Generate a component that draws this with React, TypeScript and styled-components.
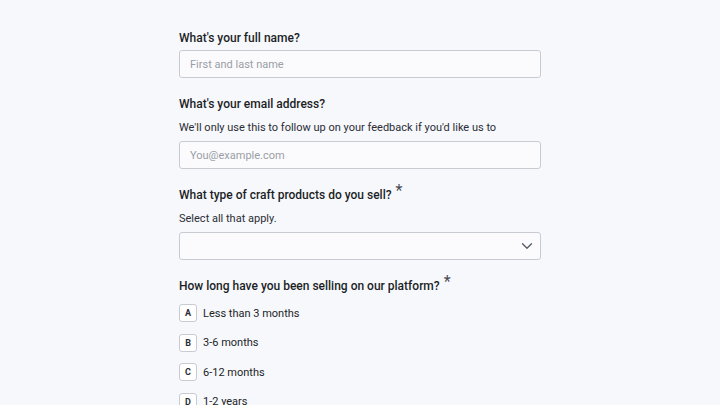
import React from 'react'
import styled, { createGlobalStyle } from 'styled-components'
import { ChevronDown } from 'lucide-react'

const GlobalStyle = createGlobalStyle`
  html, body {
    margin: 0;
    padding: 0;
    background: #f7f8fc;
    font-family: Roboto, "Liberation Sans", sans-serif;
    color: #1c1f26;
  }
`

const Page = styled.div`
  width: 720px;
  height: 405px;
  overflow: hidden;
  display: flex;
  justify-content: center;
`

const Form = styled.form`
  width: 362px;
  padding-top: 28px;
  display: flex;
  flex-direction: column;
  gap: 16px;
`

const Field = styled.div`
  display: flex;
  flex-direction: column;
`

const Question = styled.div<{ $gapBelow?: number }>`
  font-size: 12px;
  font-weight: 500;
  line-height: 20px;
  margin-bottom: ${({ $gapBelow }) => $gapBelow ?? 2}px;
  color: #1c1f26;
`

const Required = styled.span`
  font-size: 16px;
  font-weight: 400;
  line-height: 0;
  color: #4a4d55;
  margin-left: 4px;
  position: relative;
  top: -3px;
`

const Hint = styled.div`
  font-size: 11px;
  line-height: 18px;
  margin: 5px 0 4px;
  color: #2a2d34;
`

const TextInput = styled.input`
  box-sizing: border-box;
  height: 28px;
  width: 100%;
  border: 1px solid #c8cbd2;
  border-radius: 3px;
  background: #fbfbfd;
  padding: 0 10px;
  font-family: inherit;
  font-size: 11px;
  color: #1c1f26;
  outline: none;

  &::placeholder {
    color: #9a9ea6;
  }
`

const Select = styled.div`
  box-sizing: border-box;
  height: 28px;
  width: 100%;
  border: 1px solid #c8cbd2;
  border-radius: 3px;
  background: #fbfbfd;
  display: flex;
  align-items: center;
  justify-content: flex-end;
  padding-right: 4.5px;
  color: #5a5d65;
`

const Options = styled.div`
  display: flex;
  flex-direction: column;
  gap: 11.5px;
`

const Option = styled.label`
  height: 18px;
  display: flex;
  align-items: center;
  gap: 6px;
  font-size: 11px;
  color: #1c1f26;
`

const KeyBox = styled.span`
  box-sizing: border-box;
  width: 18px;
  height: 18px;
  border: 1px solid #c8cbd2;
  border-radius: 3px;
  background: #ffffff;
  display: flex;
  align-items: center;
  justify-content: center;
  font-size: 9px;
  font-weight: 700;
  color: #2a2d34;
`

const durations = [
  { key: 'A', label: 'Less than 3 months' },
  { key: 'B', label: '3-6 months' },
  { key: 'C', label: '6-12 months' },
  { key: 'D', label: '1-2 years' },
  { key: 'E', label: 'More than 2 years' },
]

export default function App() {
  return (
    <Page>
      <GlobalStyle />
      <Form onSubmit={(e) => e.preventDefault()}>
        <Field>
          <Question>What's your full name?</Question>
          <TextInput placeholder="First and last name" />
        </Field>

        <Field>
          <Question $gapBelow={0}>What's your email address?</Question>
          <Hint>We'll only use this to follow up on your feedback if you'd like us to</Hint>
          <TextInput placeholder="You@example.com" />
        </Field>

        <Field>
          <Question $gapBelow={0}>
            What type of craft products do you sell?<Required>*</Required>
          </Question>
          <Hint>Select all that apply.</Hint>
          <Select>
            <ChevronDown size={18} strokeWidth={1.8} />
          </Select>
        </Field>

        <Field>
          <Question $gapBelow={8}>
            How long have you been selling on our platform?<Required>*</Required>
          </Question>
          <Options>
            {durations.map((d) => (
              <Option key={d.key}>
                <KeyBox>{d.key}</KeyBox>
                {d.label}
              </Option>
            ))}
          </Options>
        </Field>
      </Form>
    </Page>
  )
}
